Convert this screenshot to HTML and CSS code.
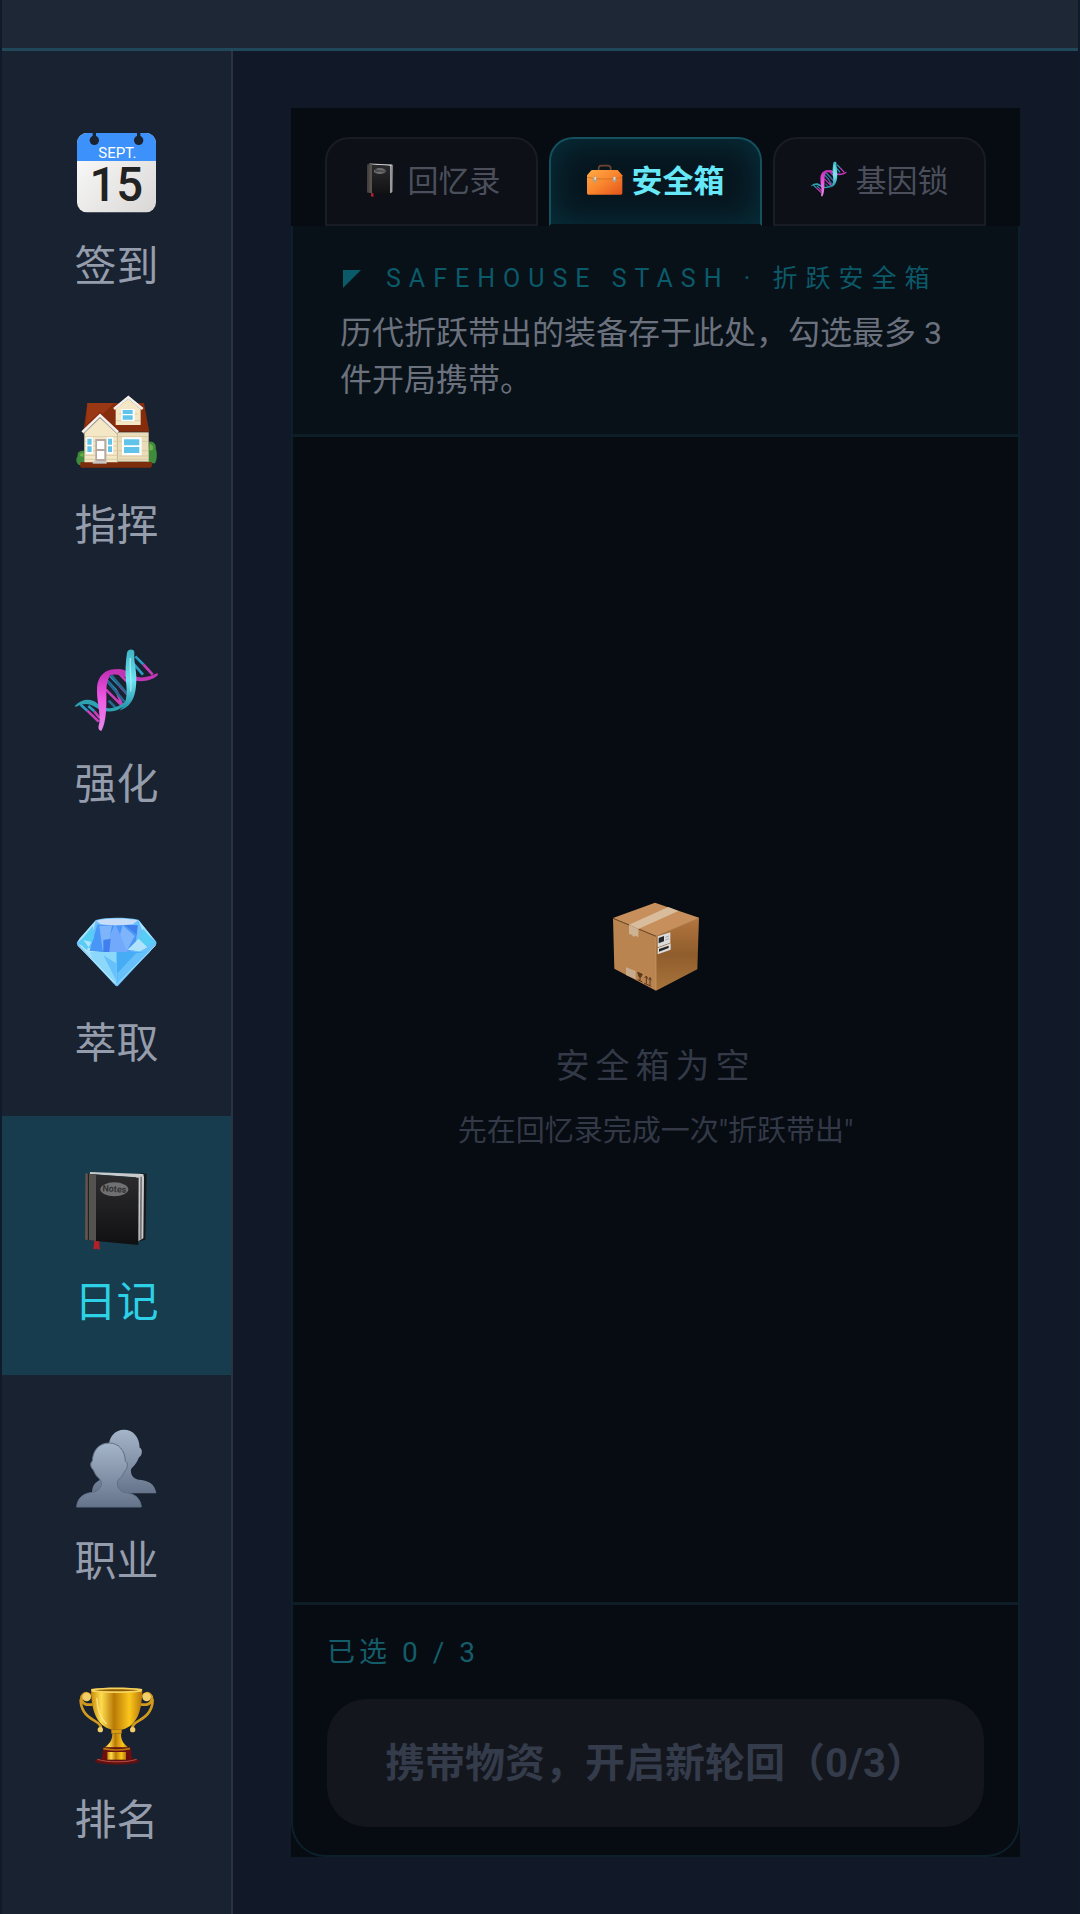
FILE: index.html
```html
<!DOCTYPE html>
<html lang="zh-CN">
<head>
  <meta charset="utf-8">
  <meta name="viewport" content="width=device-width, initial-scale=1">
  <title>安全箱</title>
  <link rel="stylesheet" href="styles.css">
</head>
<body>
  <!-- icons used more than once, and shared gradients -->
  <svg class="sprite" aria-hidden="true">
    <defs>
      <linearGradient id="pink" x1="0" y1="0" x2="0" y2="1">
        <stop offset="0" stop-color="#c02cb4"/><stop offset=".5" stop-color="#f05ce6"/><stop offset="1" stop-color="#e58ae6"/>
      </linearGradient>
      <linearGradient id="cyan" x1="0" y1="0" x2="0" y2="1">
        <stop offset="0" stop-color="#3fb4c4"/><stop offset=".5" stop-color="#6fe4f0"/><stop offset="1" stop-color="#1d8ea6"/>
      </linearGradient>
      <linearGradient id="cover" x1="0" y1="0" x2="0" y2="1">
        <stop offset="0" stop-color="#2c2c2e"/><stop offset="1" stop-color="#101012"/>
      </linearGradient>
      <linearGradient id="person" x1="0" y1="0" x2="0" y2="1">
        <stop offset="0" stop-color="#a5b5c9"/><stop offset="1" stop-color="#66748b"/>
      </linearGradient>
      <linearGradient id="gold" x1="0" y1="0" x2="1" y2="0">
        <stop offset="0" stop-color="#c98a08"/><stop offset=".2" stop-color="#ffdc4e"/><stop offset=".45" stop-color="#b97a06"/><stop offset=".75" stop-color="#fbc61c"/><stop offset="1" stop-color="#b67708"/>
      </linearGradient>
    </defs>
    <symbol id="icon-dna" viewBox="105 54 252 252">
      <g stroke-width="8">
        <path stroke="#2a9cc4" d="M286 79l24 24M277 97l32 37M201 152l28 30M211 138l27 28M122 224l20 18M145 228l18 16"/>
        <path stroke="#c83fba" d="M310 103l28 31M229 182l18 45M238 166l24 27M197 178l46 46M235 128l25 26M142 242l34 33M163 244l16 20"/>
        <path stroke="#25688f" d="M214 136l48 56M202 154l52 62M206 212l22 22"/>
      </g>
      <path fill="#c236b6" d="M190 146c18-32 52-36 73-20 25 22 54 20 88 4 3 0 4 4 2 6-19 20-62 23-92 8-27-15-50-14-71 2z"/>
      <path fill="#2fa2b2" d="M105 227c22-22 49-23 69-5 25 20 59 18 92-17-18 44-66 49-101 26-21-14-38-10-58 0z"/>
      <path fill="url(#pink)" d="M229 118c-21 14-30 34-30 69 1 42 0 92-15 116-10-3-10-11-6-24 4-31-9-70-7-107 2-34 26-56 58-54z"/>
      <path fill="url(#cyan)" d="M261 68c2-11 22-13 22-1-2 33 7 50 6 83-1 46-11 79-51 92 22-20 25-49 20-87-3-31-1-59 3-87z"/>
      <path fill="none" stroke="#b8f6fa" stroke-width="4" opacity=".7" d="M271 84c-3 34 5 66 1 100"/>
    </symbol>
    <symbol id="icon-book" viewBox="225 198 252 252">
      <path fill="#17181a" d="M421 218l19 4-4 197-22 5z"/>
      <path fill="#c9cacc" d="M270 216l160 6 2 10-2 183-16 9-6-192-138-10z"/>
      <path fill="#77787b" d="M421 230l5 0-1 186-6 4z"/>
      <path fill="#b52028" d="M283 420l15 3 1 27-8-4-11 2z"/>
      <path fill="url(#cover)" d="M266 222l150 11-1 202-149-14z"/>
      <path fill="#55534f" d="M256 220l32 4v199l-33-4z"/>
      <path fill="none" stroke="#222" stroke-width="4" d="M265 221v199"/>
      <path fill="none" stroke="#8a5c50" stroke-width="2" d="M261 221v198"/>
      <ellipse cx="343" cy="268" rx="42" ry="21" fill="#707072"/>
      <text class="book-label" x="343" y="276" text-anchor="middle" transform="rotate(4 343 268)">Notes</text>
    </symbol>
  </svg>

  <div class="app">
    <header class="topbar"></header>
    <div class="layout">
      <nav class="sidebar">
        <a class="nav-item" href="#checkin">
          <svg class="nav-icon" viewBox="0 0 252 252" aria-hidden="true">
            <defs>
              <linearGradient id="paper" x1="0" y1="0" x2="1" y2="1"><stop offset="0" stop-color="#fff"/><stop offset="1" stop-color="#d9d7d6"/></linearGradient>
            </defs>
            <rect x="6" y="9" width="237" height="238" rx="30" fill="url(#paper)"/>
            <path fill="#3c91fa" d="M6 93V39a30 30 0 0 1 30-30h177a30 30 0 0 1 30 30v54z"/>
            <g fill="#1a2330"><circle cx="58" cy="31" r="14"/><circle cx="191" cy="31" r="14"/><path d="M53 6h10v18H53zM186 6h10v18h-10z"/></g>
            <text class="cal-month" x="127" y="83" text-anchor="middle">SEPT.</text>
            <text class="cal-day" x="124" y="212" text-anchor="middle">15</text>
          </svg>
          <span>签到</span>
        </a>
        <a class="nav-item" href="#command">
          <svg class="nav-icon" viewBox="105 57 252 252" aria-hidden="true">
            <path fill="#3f8a3c" d="M327 215c14-2 23 10 20 20 5 13 5 35-2 45h-24zM133 243c-12-2-22 4-20 15-7 10-4 22 4 27h17z"/>
            <path fill="#6cb04a" d="M329 222c8 0 12 8 10 15-3 6-8 4-11 4zM130 249c-8 0-11 4-9 10l9 1z"/>
            <path fill="#7d2c0c" d="M122 276h214v12l-4 5H124l-4-5z"/>
            <path fill="#842c0c" d="M142 99h170l16 86H232l-52-53-50 50z"/>
            <path fill="#9a3814" d="M142 99h80l-34 34-8-8-42 40z"/>
            <path fill="#eadcb8" d="M232 187h94v88h-94z"/>
            <path fill="#f3e7c6" d="M180 143l52 46v88h-99v-90z"/>
            <path fill="#f3e7c6" d="M227 117l38-31 37 31v48h-75z"/>
            <path fill="none" stroke="#d0c29c" stroke-width="2" d="M134 200h98M134 214h98M134 228h98M134 242h98M134 256h98M134 268h98M236 200h88M236 214h88M236 242h88M236 258h88M236 268h88M232 187v90M228 152h73M237 132h56"/>
            <path fill="none" stroke="#a99c8c" stroke-width="3" d="M130 192l50-49 52 49"/>
            <path fill="none" stroke="#f4f0ec" stroke-width="8" d="M127 187l53-51 54 51M222 117l43-35 43 35"/>
            <path fill="#fff" d="M244 117h40v36h-40zM246 202h59v54h-59zM139 202h20v50h-20zM200 202h20v50h-20z"/>
            <path fill="#5fc3ea" d="M248 120h30v12h-30zM248 136h30v13h-30zM252 208h46v18h-46zM252 231h46v18h-46zM142 206h13v18h-13zM142 229h13v17h-13zM204 206h12v18h-12zM204 229h12v17h-12z"/>
            <path fill="#b6a8a0" d="M166 207h33v68h-33z"/>
            <path fill="#fff" d="M171 213h22v24h-22zM171 243h22v24h-22z"/>
            <path fill="#c9c8c6" d="M158 274h42v7h-42z"/>
          </svg>
          <span>指挥</span>
        </a>
        <a class="nav-item" href="#enhance">
          <svg class="nav-icon" aria-hidden="true"><use href="#icon-dna"/></svg>
          <span>强化</span>
        </a>
        <a class="nav-item" href="#extract">
          <svg class="nav-icon" viewBox="105 51 252 252" aria-hidden="true">
            <path fill="#69c0fb" d="M168 90c30-9 90-8 127-1l54 66c1 4 0 8-2 11L237 284c-4 6-9 6-13 0L112 165c-2-4-2-7 0-10z"/>
            <path fill="#a9e2fb" d="M168 90l-8 30-48 38 6-12zM295 89l10 28 42 38zM183 186l-68-24 109 121z"/>
            <path fill="#4897f8" d="M172 104l54-2-37 84-40-4zM226 102l68 4-10 78-44 2z"/>
            <path fill="#72a9fb" d="M226 102l-36 84h73z"/>
            <path fill="#7db4fb" d="M178 108l10 74 20-32 8-44zM248 106l-8 28 20 50 24-46z"/>
            <path fill="#3f80ee" d="M190 150l22-4-4 40h-18zM254 104l38 2-2 28z"/>
            <path fill="#55cdf5" d="M118 158l40-50 4 36-22 36zM310 116l34 42-58 26z"/>
            <path fill="#b0e4fd" d="M262 180l34-34 26 26-22 12zM130 150l24 6-8 16z"/>
            <path fill="#8bd8fb" d="M150 186h80v98l-74-80z"/>
            <path fill="#47acf6" d="M230 186h96l-96 98z"/>
            <path fill="#66c0fa" d="M232 250l56-60 44-6-100 98zM190 196l38 24v50z"/>
            <path fill="#c8def8" d="M168 92c30-9 92-8 126-1l-16 12c-30 4-60 4-96 0z"/>
            <path fill="none" stroke="#c0ecff" stroke-width="3" opacity=".7" d="M113 166l117 118 117-118"/>
          </svg>
          <span>萃取</span>
        </a>
        <a class="nav-item active" href="#diary" aria-current="page">
          <svg class="nav-icon" aria-hidden="true"><use href="#icon-book"/></svg>
          <span>日记</span>
        </a>
        <a class="nav-item" href="#class">
          <svg class="nav-icon" viewBox="105 45 252 252" aria-hidden="true">
            <path fill="url(#person)" d="M252 59c27 0 46 21 47 54 8 3 9 17 2 26-5 3-6 8-9 14-5 10-13 17-19 25-2 15 6 28 22 31 28 2 50 11 54 41H156c0-24 11-36 30-42l20-100c2-30 20-49 46-49z"/>
            <path fill="url(#person)" stroke="#5f6e84" stroke-width="3" d="M207 99c29 0 48 22 49 54 7 3 8 14 3 25-6 6-9 14-13 20-7 8-12 11-14 18-1 14 6 26 20 31 30 3 49 15 52 44H110c2-28 21-42 49-44 17-5 27-14 25-31-3-8-9-12-15-19-4-6-6-11-9-17-9-9-11-20-3-27 1-31 20-54 50-54z"/>
          </svg>
          <span>职业</span>
        </a>
        <a class="nav-item" href="#rank">
          <svg class="nav-icon" viewBox="105 42 252 252" aria-hidden="true">
            <g fill="none" stroke="#d29a1c" stroke-width="8">
              <path d="M158 104h-18c-16-4-20-22-11-30 8-8 22-4 21 6M302 104h18c16-4 20-22 11-30-8-8-22-4-21 6"/>
              <path d="M122 88c0 30 14 50 40 63 18 10 24 18 20 28M338 88c0 30-14 50-40 63-18 10-24 18-20 28"/>
            </g>
            <g fill="#f3cf6c"><circle cx="140" cy="81" r="13"/><circle cx="320" cy="81" r="13"/><circle cx="181" cy="179" r="8"/><circle cx="278" cy="179" r="8"/></g>
            <path fill="url(#gold)" d="M153 59h154c-1 64-16 109-62 120h-30c-46-12-61-58-62-120z"/>
            <path fill="#f7d35b" d="M153 57c40-6 114-6 154 0l-3 8c-40 5-108 5-148 0z"/>
            <path fill="#8f5d08" d="M164 61c40-4 92-4 132 0-40 4-92 4-132 0z"/>
            <path fill="#d99a10" d="M214 179h31v12h-31z"/>
            <path fill="url(#gold)" d="M217 191h26c0 20 8 32 24 42H192c16-10 25-22 25-42z"/>
            <path fill="#6b0f10" d="M190 232h82l4 36h-91z"/>
            <ellipse cx="231" cy="273" rx="66" ry="11" fill="#64100f"/>
            <path fill="none" stroke="#b4504a" stroke-width="3" d="M172 268c30 10 90 10 118 0"/>
            <path fill="none" stroke="#b37a12" stroke-width="5" d="M190 236c25 5 56 5 80 0"/>
            <path fill="url(#gold)" d="M202 246h56v23h-56z"/>
            <path fill="none" stroke="#fff0a8" stroke-width="4" opacity=".7" d="M170 84c2 36 12 62 30 78"/>
          </svg>
          <span>排名</span>
        </a>
      </nav>

      <main class="content">
        <section class="stash">
          <div class="tabs" role="tablist">
            <button class="tab" type="button" role="tab" aria-selected="false">
              <svg class="tab-icon" aria-hidden="true"><use href="#icon-book"/></svg>
              回忆录
            </button>
            <button class="tab active" type="button" role="tab" aria-selected="true">
              <svg class="tab-icon" viewBox="918 219 108 108" aria-hidden="true">
                <defs>
                  <linearGradient id="case" x1="0" y1="0" x2="1" y2="1"><stop offset="0" stop-color="#ffac46"/><stop offset=".5" stop-color="#f9852d"/><stop offset="1" stop-color="#e2541b"/></linearGradient>
                </defs>
                <path fill="none" stroke="#6d4330" stroke-width="5" d="M953 247v-6c0-5 3-8 8-8h20c5 0 8 3 8 8v6"/>
                <path fill="url(#case)" d="M932 246h78l14 16v54c0 2-2 4-4 4h-98c-2 0-4-2-4-4v-54z"/>
                <path fill="none" stroke="#c9601a" stroke-width="2" d="M919 268c34 7 70 7 104 0"/>
                <path fill="#a9a08e" d="M937 266h10v14l-6 4-5-6zM995 266h10l1 12-5 6-6-4z"/>
                <path fill="#e6dcc8" d="M940 267h5v8h-5zM998 267h5v8h-5z"/>
              </svg>
              安全箱
            </button>
            <button class="tab" type="button" role="tab" aria-selected="false">
              <svg class="tab-icon" aria-hidden="true"><use href="#icon-dna"/></svg>
              基因锁
            </button>
          </div>

          <div class="panel" role="tabpanel">
            <div class="intro">
              <h2 class="eyebrow">
                <svg class="corner" viewBox="0 0 18 18" aria-hidden="true"><path fill="currentColor" d="M0 0h18L0 18z"/></svg>
                SAFEHOUSE STASH · 折跃安全箱
              </h2>
              <p>历代折跃带出的装备存于此处，勾选最多 3 件开局携带。</p>
            </div>

            <div class="empty">
              <div class="empty-icon">
                <svg viewBox="516 64 264 268" aria-hidden="true">
                  <defs>
                    <linearGradient id="side" x1="0" y1="0" x2="0" y2="1"><stop offset="0" stop-color="#b3763f"/><stop offset=".5" stop-color="#8f5d2c"/><stop offset="1" stop-color="#a9743c"/></linearGradient>
                  </defs>
                  <path fill="#b98450" d="M519 112l129 54v164l-125-66z"/>
                  <path fill="url(#side)" d="M648 166l129-55-5 155-124 64z"/>
                  <path fill="#c68f5c" d="M645 66l132 45-129 55-129-54z"/>
                  <path fill="none" stroke="#6e4626" stroke-width="3" d="M519 113l129 54"/>
                  <path fill="none" stroke="#cf9c68" stroke-width="2" d="M648 168v160M775 112l-127 54"/>
                  <path fill="#d8bc9c" d="M685 79l30 12-120 54-28-13z"/>
                  <path fill="#cdb393" d="M567 132l28 13v25l-8-5-6 3-6-6-8-2z"/>
                  <path fill="#c8ab8b" d="M558 260l29 11v25l-29-13z"/>
                  <path fill="#dcdcdc" d="M653 167l38-12v31l-38 14zM653 202l39-14v19l-39 14z"/>
                  <path fill="#26262a" d="M656 172l16-6v16l-16 6zM657 205l29-10v7l-29 11z"/>
                  <path stroke="#8c8c90" stroke-width="2" d="M676 178l11-4M676 170l11-4"/>
                  <g fill="none" stroke="#5a381c" stroke-width="3">
                    <path fill="#5a381c" d="M593 275l14 6-5 9-5-2z"/>
                    <path d="M600 288v12M593 297l14 7M619 309v-22M630 313v-22M614 292l5-6 4 8M626 297l4-6 4 8M613 308l21 9"/>
                  </g>
                </svg>
              </div>
              <p class="empty-title">安全箱为空</p>
              <p class="empty-hint">先在回忆录完成一次"折跃带出"</p>
            </div>

            <div class="actions">
              <p class="count">已选 0 / 3</p>
              <button class="start" type="button" disabled>携带物资，开启新轮回（0/3）</button>
            </div>
          </div>
        </section>
      </main>
    </div>
  </div>
</body>
</html>
```
FILE: styles.css
```css
* {
  box-sizing: border-box;
}
body {
  margin: 0;
  background-color: #111827;
  color: #9ca3af;
  font-family: Roboto, "Noto Sans CJK SC", sans-serif;
}
p, h2 {
  margin: 0;
  font-weight: 400;
}
button {
  font-family: inherit;
}
.sprite {
  position: absolute;
  width: 0;
  height: 0;
}
.app {
  display: flex;
  flex-direction: column;
  min-height: 100vh;
  border: 0 solid #0f1a2b;
  border-width: 0 2px;
}
.topbar {
  height: 51px;
  background-color: #1e2735;
  border-bottom: 3px solid #21485a;
}
.layout {
  flex: 1;
  display: flex;
}

/* sidebar */
.sidebar {
  width: 231px;
  flex-shrink: 0;
  padding-top: 29px;
  background-color: #192230;
  border-right: 2px solid #2a3341;
}
.nav-item {
  display: flex;
  flex-direction: column;
  align-items: center;
  gap: 23px;
  padding: 50px 0 42px;
  color: #959dac;
  font-size: 42px;
  line-height: 60px;
  text-decoration: none;
}
.nav-item.active {
  background-color: #163c4d;
  color: #2dd0e5;
}
.nav-icon {
  width: 84px;
  height: 84px;
}
.cal-month {
  fill: #fff;
  font-size: 45px;
}
.cal-day {
  fill: #222;
  font-size: 142px;
  font-weight: 500;
}
.book-label {
  fill: #333;
  font-size: 27px;
  font-weight: 700;
}

/* main */
.content {
  flex: 1;
  display: flex;
  padding: 57px 58px;
}
.stash {
  flex: 1;
  display: flex;
  flex-direction: column;
  background-color: #070b12;
}
.tabs {
  display: flex;
  gap: 11px;
  padding: 29px 34px 0;
}
.tab {
  flex: 1;
  display: flex;
  justify-content: center;
  align-items: center;
  gap: 9px;
  height: 89px;
  padding: 0 0 6px;
  border: 2px solid #191c23;
  border-radius: 24px 24px 0 0;
  background-color: #0d1017;
  color: #4a4f5b;
  font-size: 31px;
}
.tab.active {
  border-color: #14505e;
  border-bottom-color: #081018;
  background-color: #07161f;
  box-shadow: inset 0 0 34px rgba(6, 182, 212, 0.18);
  color: #67e8f9;
  font-weight: 700;
}
.tab-icon {
  width: 36px;
  height: 36px;
}
.panel {
  flex: 1;
  display: flex;
  flex-direction: column;
  border: 2px solid #0c202b;
  border-top: 0;
  border-radius: 0 0 34px 34px;
}
.intro {
  padding: 34px 47px 30px;
  background-color: #081018;
  border-bottom: 3px solid #0d1e27;
}
.eyebrow {
  display: flex;
  align-items: center;
  gap: 25px;
  margin-bottom: 12px;
  padding-left: 3px;
  color: #0b5a69;
  font-size: 25px;
  line-height: 38px;
  letter-spacing: 8px;
}
.corner {
  width: 18px;
  height: 18px;
}
.intro p {
  color: #6b717d;
  font-size: 32px;
  line-height: 47px;
}
.empty {
  flex: 1;
  display: flex;
  flex-direction: column;
  justify-content: center;
  align-items: center;
  color: #333946;
}
.empty-icon {
  display: flex;
  align-items: center;
  height: 118px;
  margin-bottom: 36px;
}
.empty-icon svg {
  width: 88px;
}
.empty-title {
  margin-bottom: 20px;
  font-size: 34px;
  line-height: 48px;
  letter-spacing: 6px;
}
.empty-hint {
  font-size: 29px;
  line-height: 42px;
}
.actions {
  padding: 28px 34px;
  border-top: 3px solid #0d1e27;
}
.count {
  margin-bottom: 26px;
  color: #145c69;
  font-size: 28px;
  line-height: 40px;
  letter-spacing: 4px;
}
.start {
  width: 100%;
  height: 128px;
  padding: 0 0 6px;
  border: 0;
  border-radius: 40px;
  background-color: #13161d;
  color: #343b4a;
  font-size: 40px;
  font-weight: 700;
}
```
